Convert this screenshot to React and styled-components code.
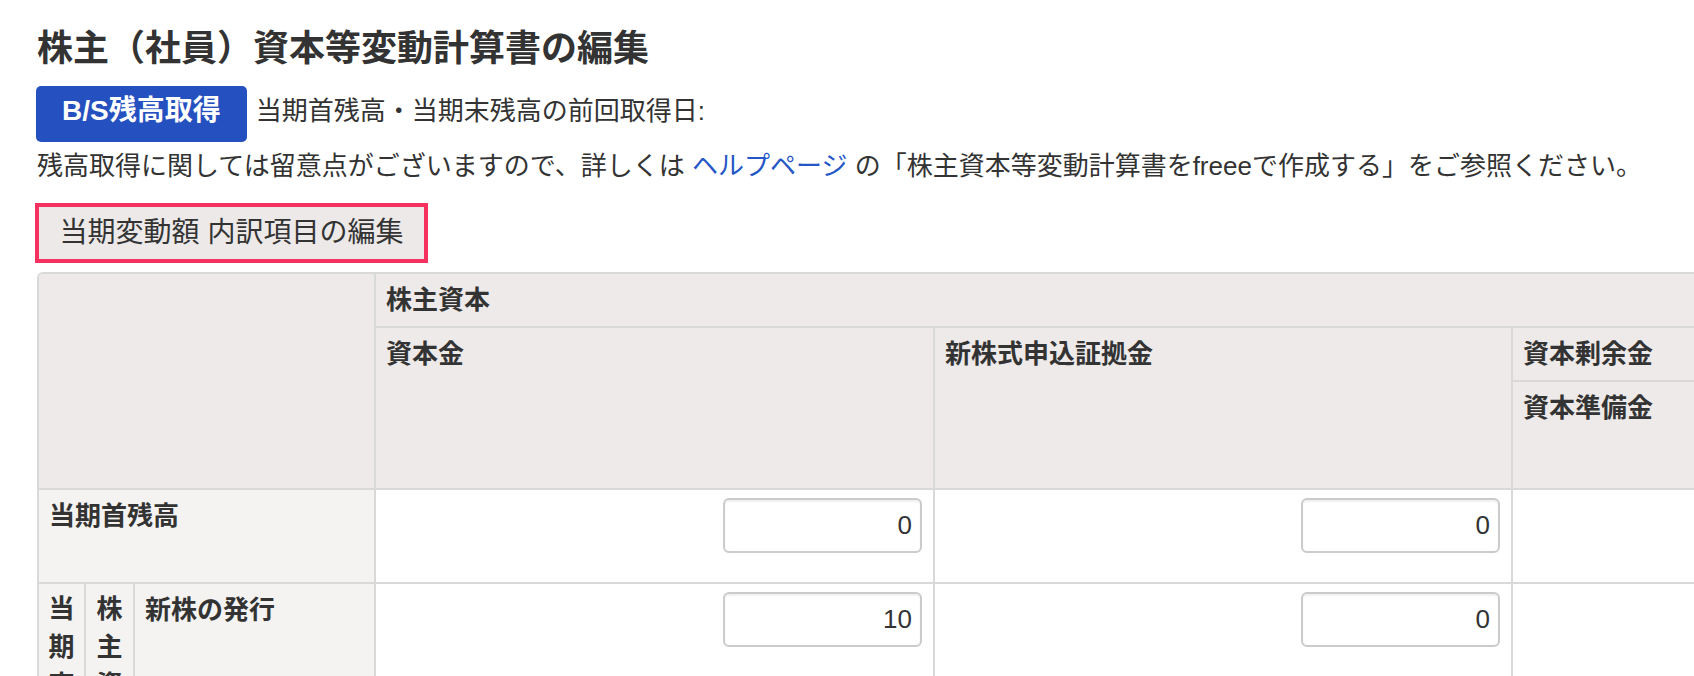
import React from "react";
import styled, { createGlobalStyle } from "styled-components";

const GlobalStyle = createGlobalStyle`
  html, body {
    margin: 0;
    padding: 0;
    background: #ffffff;
  }
  body {
    font-family: "Liberation Sans", "Noto Sans CJK JP", sans-serif;
    color: #333333;
    overflow: hidden;
  }
`;

const Page = styled.div`
  box-sizing: border-box;
  height: 100vh;
  overflow: hidden;
  padding: 24px 0 0 37px;
`;

const Title = styled.h1`
  margin: 0;
  font-size: 36px;
  line-height: 50px;
  font-weight: 700;
  color: #333333;
  white-space: nowrap;
`;

const ActionRow = styled.div`
  display: flex;
  align-items: center;
  gap: 9px;
  margin-top: 12px;
  height: 56px;
`;

const PrimaryButton = styled.button`
  height: 56px;
  margin-left: -1px;
  padding: 0 26px 7px;
  border: none;
  border-radius: 5px;
  background: #2550bf;
  color: #ffffff;
  font-family: inherit;
  font-size: 28px;
  line-height: 38px;
  font-weight: 700;
  white-space: nowrap;
  cursor: pointer;
`;

const InfoText = styled.span`
  margin-bottom: 7px;
  font-size: 26px;
  line-height: 38px;
  white-space: nowrap;
`;

const Note = styled.p`
  margin: 5px 0 0;
  font-size: 26px;
  line-height: 38px;
  white-space: nowrap;
`;

const HelpLink = styled.a`
  color: #2457c5;
  text-decoration: none;
`;

const HighlightFrame = styled.div`
  display: flex;
  width: fit-content;
  margin: 18px 0 0 -2px;
  border: 4px solid #f5325f;
`;

const EditButton = styled.button`
  width: 385px;
  height: 52px;
  padding: 0;
  border: none;
  background: #ece9e8;
  color: #333333;
  font-family: inherit;
  font-size: 28px;
  line-height: 38px;
  font-weight: 400;
  text-align: center;
  white-space: nowrap;
  cursor: pointer;
`;

const TableFrame = styled.div`
  margin-top: 9px;
  border-top: 2px solid #d9d9d9;
  border-left: 2px solid #d9d9d9;
  border-top-left-radius: 6px;
  overflow: hidden;
`;

const Table = styled.table`
  border-collapse: separate;
  border-spacing: 0;
  table-layout: fixed;
  width: 2632px;
`;

const Col = styled.col`
  width: ${(p) => p.$w}px;
`;

const Row = styled.tr`
  height: ${(p) => p.$h}px;
`;

const HeadCell = styled.th`
  box-sizing: border-box;
  padding: 7px 10px;
  border-right: 2px solid #d9d9d9;
  border-bottom: 2px solid #d9d9d9;
  background: ${(p) => (p.$tone === "label" ? "#f4f3f2" : "#edeae9")};
  color: #333333;
  font-size: 26px;
  line-height: 38px;
  font-weight: 700;
  text-align: left;
  vertical-align: top;
  white-space: nowrap;
`;

const StackCell = styled.th`
  box-sizing: border-box;
  padding: 6px 9px;
  border-right: 2px solid #d9d9d9;
  border-bottom: 2px solid #d9d9d9;
  background: #f4f3f2;
  color: #333333;
  font-size: 26px;
  line-height: 38px;
  font-weight: 700;
  text-align: center;
  vertical-align: top;
  word-break: break-all;
`;

const AmountCell = styled.td`
  box-sizing: border-box;
  padding: 8px 11px;
  border-right: 2px solid #d9d9d9;
  border-bottom: 2px solid #d9d9d9;
  background: #ffffff;
  text-align: right;
  vertical-align: top;
`;

const AmountInput = styled.input`
  box-sizing: border-box;
  width: 199px;
  height: 55px;
  padding: 0 8px;
  border: 2px solid #cbcbcb;
  border-radius: 6px;
  box-shadow: inset 0 2px 2px rgba(0, 0, 0, 0.06);
  background: #ffffff;
  color: #333333;
  font-family: "Liberation Sans", "Noto Sans CJK JP", sans-serif;
  font-size: 26px;
  text-align: right;
  outline: none;
`;

const columnWidths = [47, 49, 241, 559, 578, 579, 579];

const rows = [
  { label: "新株の発行", values: ["10", "0", "0", "0"] },
  { label: "剰余金の配当", values: ["0", "0", "0", "0"] },
  { label: "当期純利益", values: ["0", "0", "0", "0"] },
];

function Amounts({ values }) {
  return values.map((v, i) => (
    <AmountCell key={i}>
      <AmountInput defaultValue={v} />
    </AmountCell>
  ));
}

export default function App() {
  return (
    <>
      <GlobalStyle />
      <Page>
        <Title>株主（社員）資本等変動計算書の編集</Title>
        <ActionRow>
          <PrimaryButton type="button">B/S残高取得</PrimaryButton>
          <InfoText>当期首残高・当期末残高の前回取得日:</InfoText>
        </ActionRow>
        <Note>
          残高取得に関しては留意点がございますので、詳しくは{" "}
          <HelpLink href="#">ヘルプページ</HelpLink>{" "}
          の「株主資本等変動計算書をfreeeで作成する」をご参照ください。
        </Note>
        <HighlightFrame>
          <EditButton type="button">当期変動額 内訳項目の編集</EditButton>
        </HighlightFrame>
        <TableFrame>
          <Table>
            <colgroup>
              {columnWidths.map((w, i) => (
                <Col key={i} $w={w} />
              ))}
            </colgroup>
            <thead>
              <Row $h={54}>
                <HeadCell colSpan={3} rowSpan={3} />
                <HeadCell colSpan={4}>株主資本</HeadCell>
              </Row>
              <Row $h={54}>
                <HeadCell rowSpan={2}>資本金</HeadCell>
                <HeadCell rowSpan={2}>新株式申込証拠金</HeadCell>
                <HeadCell colSpan={2}>資本剰余金</HeadCell>
              </Row>
              <Row $h={108}>
                <HeadCell>資本準備金</HeadCell>
                <HeadCell>その他資本剰余金</HeadCell>
              </Row>
            </thead>
            <tbody>
              <Row $h={94}>
                <HeadCell colSpan={3} $tone="label">
                  当期首残高
                </HeadCell>
                <Amounts values={["0", "0", "0", "0"]} />
              </Row>
              {rows.map((r, i) => (
                <Row key={r.label} $h={94}>
                  {i === 0 && (
                    <>
                      <StackCell rowSpan={rows.length}>当期変動額</StackCell>
                      <StackCell rowSpan={rows.length}>株主資本</StackCell>
                    </>
                  )}
                  <HeadCell $tone="label">{r.label}</HeadCell>
                  <Amounts values={r.values} />
                </Row>
              ))}
            </tbody>
          </Table>
        </TableFrame>
      </Page>
    </>
  );
}
